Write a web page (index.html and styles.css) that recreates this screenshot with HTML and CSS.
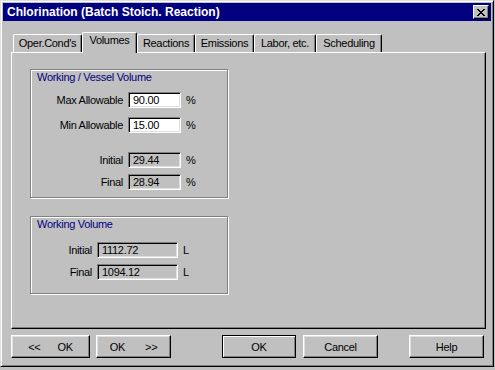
FILE: index.html
```html
<!DOCTYPE html>
<html lang="en">

<head>
    <meta charset="UTF-8">
    <title>Chlorination (Batch Stoich. Reaction)</title>
    <link rel="stylesheet" href="styles.css">
</head>

<body>
    <div class="window">
        <div class="titlebar">
            <span class="title">Chlorination (Batch Stoich. Reaction)</span>
            <div class="close">
                <svg width="8" height="7" viewBox="0 0 8 7">
                    <path d="M0 0h2v1h1v1h2v-1h1v-1h2v1h-1v1h-1v1h-1v1h1v1h1v1h1v1h-2v-1h-1v-1h-2v1h-1v1h-2v-1h1v-1h1v-1h1v-1h-1v-1h-1v-1h-1z" fill="#000" />
                </svg>
            </div>
        </div>

        <div class="tabs">
            <div class="tab tab-oper">Oper.Cond's</div>
            <div class="tab tab-vol active">Volumes</div>
            <div class="tab tab-react">Reactions</div>
            <div class="tab tab-emis">Emissions</div>
            <div class="tab tab-labor">Labor, etc.</div>
            <div class="tab tab-sched">Scheduling</div>
        </div>

        <div class="panel">
            <div class="group group-vessel">
                <div class="legend">Working / Vessel Volume</div>
                <div class="field field-max"><span class="lbl">Max Allowable</span><span class="box edit">90.00</span><span class="unit">%</span></div>
                <div class="field field-min"><span class="lbl">Min Allowable</span><span class="box edit">15.00</span><span class="unit">%</span></div>
                <div class="field field-init"><span class="lbl">Initial</span><span class="box">29.44</span><span class="unit">%</span></div>
                <div class="field field-final"><span class="lbl">Final</span><span class="box">28.94</span><span class="unit">%</span></div>
            </div>

            <div class="group group-working">
                <div class="legend">Working Volume</div>
                <div class="field field-winit"><span class="lbl">Initial</span><span class="box">1112.72</span><span class="unit">L</span></div>
                <div class="field field-wfinal"><span class="lbl">Final</span><span class="box">1094.12</span><span class="unit">L</span></div>
            </div>
        </div>

        <div class="buttons">
            <div class="btn btn-prev"><span>&lt;&lt;</span><span>OK</span></div>
            <div class="btn btn-next"><span>OK</span><span>&gt;&gt;</span></div>
            <div class="btn btn-ok default">OK</div>
            <div class="btn btn-cancel">Cancel</div>
            <div class="btn btn-help">Help</div>
        </div>
    </div>
</body>

</html>
```

FILE: styles.css
```css
* {
    box-sizing: border-box;
}

body {
    margin: 0;
    background: #c0c0c0;
    font: 11px "Liberation Sans", Arial, sans-serif;
    letter-spacing: -0.3px;
    color: #000;
}

.window {
    width: 494px;
    height: 367px;
    padding: 2px;
    display: flex;
    flex-direction: column;
    background: #c0c0c0;
    border: 1px solid;
    border-color: #dfdfdf #000 #000 #dfdfdf;
    box-shadow: inset 1px 1px #fff, inset -1px -1px #808080;
}

/* title bar */
.titlebar {
    height: 18px;
    display: flex;
    align-items: center;
    justify-content: space-between;
    padding: 0 2px 0 4px;
    background: #000080;
    color: #fff;
    font-size: 12px;
    font-weight: bold;
    letter-spacing: 0;
}

.close {
    width: 16px;
    height: 14px;
    display: flex;
    align-items: center;
    justify-content: center;
    background: #c0c0c0;
    border: 1px solid;
    border-color: #fff #000 #000 #fff;
    box-shadow: inset -1px -1px #808080;
}

/* tabs */
.tabs {
    height: 31px;
    display: flex;
    align-items: flex-end;
    padding-left: 10px;
}

.tab {
    height: 18px;
    padding-top: 1px;
    line-height: 14px;
    text-align: center;
    background: #c0c0c0;
    border: 1px solid;
    border-bottom: 0;
    border-color: #fff #000 #000 #fff;
    border-radius: 2px 2px 0 0;
    box-shadow: inset -1px 0 #808080;
}

.tab.active {
    height: 21px;
    padding-top: 0;
    margin-bottom: -1px;
    position: relative;
    z-index: 1;
}

.tab-oper { width: 69px; }
.tab-vol { width: 55px; }
.tab-react { width: 58px; }
.tab-emis { width: 59px; }
.tab-labor { width: 62px; }
.tab-sched { width: 66px; }

/* page */
.panel {
    width: 475px;
    height: 277px;
    margin-left: 8px;
    padding: 16px 0 0 18px;
    border: 1px solid;
    border-color: #fff #000 #000 #fff;
    box-shadow: inset -1px -1px #808080;
}

.group {
    width: 198px;
    border: 1px solid #808080;
    box-shadow: inset 1px 1px #fff, 1px 1px #fff;
}

.group-vessel {
    height: 129px;
}

.group-working {
    height: 78px;
    margin-top: 18px;
}

.legend {
    height: 14px;
    line-height: 14px;
    padding-left: 6px;
    color: #000080;
}

.field {
    display: grid;
    grid-template-columns: 92px 53px auto;
    column-gap: 5px;
    align-items: center;
    height: 16px;
}

.group-working .field {
    grid-template-columns: 61px 81px auto;
}

.lbl {
    text-align: right;
}

.box {
    height: 16px;
    line-height: 14px;
    padding-left: 4px;
    border: 1px solid;
    border-color: #808080 #fff #fff #808080;
    box-shadow: inset 1px 1px #000, inset -1px -1px #dfdfdf;
}

.box.edit {
    background: #fff;
}

.field-max { margin-top: 8px; }
.field-min { margin-top: 9px; }
.field-init { margin-top: 19px; }
.field-final { margin-top: 6px; }
.field-winit { margin-top: 11px; }
.field-wfinal { margin-top: 6px; }

/* buttons */
.buttons {
    display: flex;
    margin: 6px 0 0 8px;
}

.btn {
    height: 23px;
    width: 75px;
    display: flex;
    align-items: center;
    justify-content: center;
    border: 1px solid;
    border-color: #fff #000 #000 #fff;
    box-shadow: inset -1px -1px #808080, inset 1px 1px #dfdfdf;
}

.btn.default {
    border-color: #000;
    box-shadow: inset 1px 1px #fff, inset -1px -1px #808080;
}

.btn-prev {
    width: 79px;
    gap: 17px;
}

.btn-next {
    margin-left: 6px;
    gap: 20px;
}

.btn-ok {
    width: 74px;
    margin-left: 51px;
}

.btn-cancel {
    margin-left: 7px;
}

.btn-help {
    margin-left: 31px;
}
```
